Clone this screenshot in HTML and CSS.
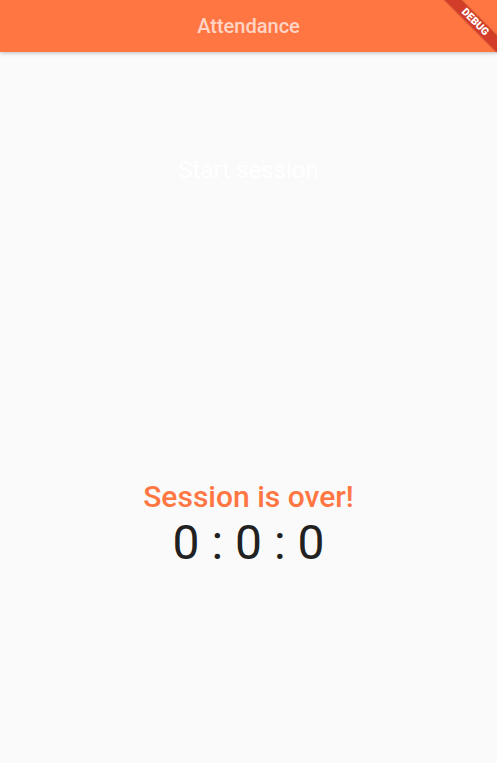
FILE: index.html
```html
<!DOCTYPE html>
<html>
<head>
<meta charset="utf-8">
<link rel="stylesheet" href="styles.css">
</head>
<body>
<div class="app">
  <header class="appbar">
    <h1 class="title">Attendance</h1>
  </header>
  <main class="content">
    <div class="start-area">
      <button class="start-btn">Start session</button>
    </div>
    <div class="status">
      <div class="over">Session is over!</div>
      <div class="timer">0 : 0 : 0</div>
    </div>
  </main>
  <div class="debug-banner">DEBUG</div>
</div>
</body>
</html>
```
FILE: styles.css
```css
* { box-sizing: border-box; }
html, body {
  margin: 0;
  padding: 0;
  width: 497px;
  height: 763px;
  overflow: hidden;
  background: #fafafa;
  font-family: Roboto, "Noto Sans", sans-serif;
}
.app {
  position: relative;
  width: 497px;
  height: 763px;
  display: flex;
  flex-direction: column;
  overflow: hidden;
}
.appbar {
  height: 52px;
  background: #ff7643;
  display: flex;
  align-items: center;
  justify-content: center;
  box-shadow: 0 1px 4px rgba(0,0,0,0.25);
  position: relative;
  z-index: 1;
  flex: none;
}
.title {
  margin: 0;
  font-size: 20px;
  font-weight: 500;
  color: rgba(255,255,255,0.7);
}
.content {
  flex: 1;
  display: flex;
  flex-direction: column;
  align-items: center;
}
.start-area {
  padding-top: 104px;
  height: 427px;
}
.start-btn {
  border: 0;
  background: transparent;
  color: #ffffff;
  font-family: Roboto, "Noto Sans", sans-serif;
  font-size: 24px;
  padding: 0;
  line-height: 28px;
}
.status {
  display: flex;
  flex-direction: column;
  align-items: center;
}
.over {
  color: #ff7643;
  font-size: 30px;
  font-weight: 500;
  line-height: 36px;
}
.timer {
  color: #212121;
  font-size: 48px;
  line-height: 56px;
}
.debug-banner {
  position: absolute;
  top: 16px;
  right: -38px;
  width: 120px;
  height: 12px;
  background: rgba(183,28,28,0.63);
  color: #fff;
  font-size: 10.5px;
  font-weight: 900;
  line-height: 12px;
  text-align: center;
  transform: rotate(45deg);
  z-index: 2;
  box-shadow: 0 0 2px rgba(0,0,0,0.3);
}
```
